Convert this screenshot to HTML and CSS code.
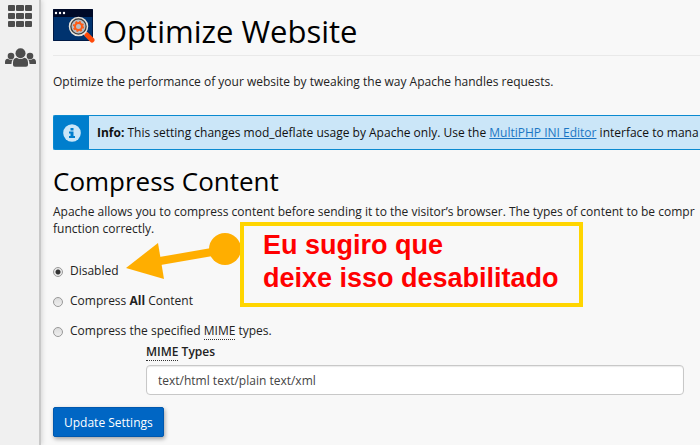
FILE: index.html
```html
<!DOCTYPE html>
<html lang="en">
<head>
    <meta charset="UTF-8">
    <meta name="viewport" content="width=device-width, initial-scale=1.0">
    <title>Optimize Website</title>
    <link rel="stylesheet" href="styles.css">
</head>
<body>
    <nav class="sidebar">
        <a href="#" aria-label="Home">
            <svg width="26" height="22" viewBox="0 0 26 22" fill="#4d4d4d">
                <rect x="1" y="0" width="7" height="6" rx="1"/><rect x="9" y="0" width="8" height="6" rx="1"/><rect x="18" y="0" width="7" height="6" rx="1"/>
                <rect x="1" y="8" width="7" height="6" rx="1"/><rect x="9" y="8" width="8" height="6" rx="1"/><rect x="18" y="8" width="7" height="6" rx="1"/>
                <rect x="1" y="16" width="7" height="6" rx="1"/><rect x="9" y="16" width="8" height="6" rx="1"/><rect x="18" y="16" width="7" height="6" rx="1"/>
            </svg>
        </a>
        <a href="#" aria-label="Users">
            <svg width="32" height="19" viewBox="0 0 32 19" fill="#4d4d4d">
                <circle cx="6" cy="8" r="3.300"/>
                <circle cx="25" cy="8" r="3.300"/>
                <path d="M0 15.500V14q0-3 2.700-3.200 2.800 1.800 5.300.4Q6.600 12.500 6.400 16H1q-1 0-1-.5zM31 15.500V14q0-3-2.700-3.200-2.800 1.800-5.300.4 1.400 1.300 1.600 4.800H30q1 0 1-.5z"/>
                <circle cx="15.500" cy="5.300" r="5"/>
                <path d="M8 17v-2.500q.2-4.500 3.700-4.800 3.800 2.700 7.600 0 3.500.3 3.700 4.800V17q0 1.700-2 1.700h-11q-2 0-2-1.700z"/>
            </svg>
        </a>
    </nav>

    <main class="content">
        <h1 class="page-title">
            <svg width="42" height="34" viewBox="0 0 42 34">
                <rect x="0" y="0" width="40" height="32" rx="1" fill="#00336f"/>
                <path d="M1 0h38q1 0 1 1v7H0V1q0-1 1-1z" fill="#000a28"/>
                <path d="M.5 8v23.500h39V8" fill="none" stroke="#001a44"/>
                <circle cx="3" cy="4" r="1.200" fill="#fff"/><circle cx="7" cy="4" r="1.200" fill="#fff"/><circle cx="11" cy="4" r="1.200" fill="#fff"/>
                <path d="M31 23l3 3" stroke="#e8e8e8" stroke-width="4"/>
                <path d="M34 26l5 5" stroke="#ff4a0a" stroke-width="5" stroke-linecap="round"/>
                <circle cx="25.500" cy="17.500" r="8" fill="#b9bec3" stroke="#3c3c3c" stroke-width="2"/>
                <circle cx="25.500" cy="17.500" r="9" fill="none" stroke="#e8e3da" stroke-width="1.500"/>
                <circle cx="25.500" cy="17.500" r="3.500" fill="none" stroke="#ff5a14" stroke-width="2"/>
                <circle cx="25.500" cy="17.500" r="4.800" fill="none" stroke="#ff5a14" stroke-width="1.600" stroke-dasharray="1.900 1.870"/>
            </svg>
            <span>Optimize Website</span>
        </h1>

        <p class="intro">Optimize the performance of your website by tweaking the way Apache handles requests.</p>

        <div class="alert">
            <div class="alert-icon">
                <svg width="18" height="18" viewBox="0 0 18 18">
                    <circle cx="9" cy="9" r="8.800" fill="#cbe6f8"/>
                    <path d="M7.500 4h3v2.500h-3zM6 7.500h4.500V12H12v2H6v-2h1.500V9.500H6z" fill="#007ecd"/>
                </svg>
            </div>
            <div class="alert-text"><strong>Info:</strong> This setting changes mod_deflate usage by Apache only. Use the <a href="#">MultiPHP INI Editor</a> interface to mana</div>
        </div>

        <h2>Compress Content</h2>
        <p class="description">Apache allows you to compress content before sending it to the visitor’s browser. The types of content to be compr<br>function correctly.</p>

        <form>
            <div class="options">
                <label class="option"><input type="radio" name="compress" checked><span>Disabled</span></label>
                <label class="option"><input type="radio" name="compress"><span>Compress <b>All</b> Content</span></label>
                <label class="option"><input type="radio" name="compress"><span>Compress the specified <abbr>MIME</abbr> types.</span></label>

                <!-- hint over the form -->
                <svg class="arrow" width="118" height="50" viewBox="0 -2 118 50" fill="#ffae00">
                    <path d="M34 27L86 18" stroke="#ffae00" stroke-width="8"/>
                    <path d="M0 34L32 9l6 36z"/>
                    <circle cx="99" cy="15" r="16"/>
                </svg>
                <div class="hint">Eu sugiro que<br>deixe isso desabilitado</div>
            </div>
            <div class="field">
                <label for="mime"><abbr>MIME</abbr> Types</label>
                <input type="text" id="mime" value="text/html text/plain text/xml">
            </div>
            <button type="submit" class="btn">Update Settings</button>
        </form>
    </main>
</body>
</html>
```
FILE: styles.css
```css
* { box-sizing: border-box; }
body {
    margin: 0;
    min-height: 100vh;
    display: flex;
    overflow: hidden;
    background: #f8f8f8;
    color: #222;
    font: 12px/17px "Open Sans", sans-serif;
}
.sidebar {
    flex: none;
    width: 41px;
    padding: 5px 0 0 5px;
    display: flex;
    flex-direction: column;
    gap: 21px;
    background: #f0f0f0;
    border-right: 2px solid #c8c8c8;
    box-shadow: 1px 0 5px rgba(0, 0, 0, 0.15);
}
.sidebar a { display: block; }
.sidebar svg { display: block; }
.sidebar a:first-child { padding-left: 2px; }
.content {
    flex: 1;
    min-width: 0;
    padding: 9px 0 8px 12px;
    white-space: nowrap;
}
h1, h2 { margin: 0; color: #000; font-weight: normal; }
.page-title {
    display: flex;
    gap: 8px;
    height: 47px;
    border-bottom: 1px solid #e9e9e9;
    font-size: 31px;
    line-height: 44px;
}
.page-title svg { flex: none; }
.intro { margin: 17px 0 25px; }
.alert {
    display: flex;
    height: 35px;
    border: 1px solid #0a8ad0;
    border-right: 0;
    border-radius: 2px 0 0 2px;
    background: #cbe6f8;
}
.alert-icon {
    flex: none;
    width: 35px;
    display: flex;
    align-items: center;
    justify-content: center;
    background: #007ecd;
}
.alert-text { padding: 8px 0 8px 8px; color: #111; }
.alert-text a { color: #1b76c4; }
h2 { margin-top: 13px; font-size: 26px; line-height: 36px; }
.description { margin: 4px 0 25px; }
.options {
    position: relative;
    display: flex;
    flex-direction: column;
    align-items: flex-start;
    gap: 13px;
}
.option { display: flex; align-items: center; gap: 7px; }
input[type="radio"] {
    appearance: none;
    width: 10px;
    height: 10px;
    margin: 2px 0 0;
    border: 1px solid #999;
    border-radius: 50%;
    background: linear-gradient(#ddd, #eee);
}
input[type="radio"]:checked {
    background: radial-gradient(circle, #333 0 2px, #e8e8e8 3px);
}
abbr { text-decoration: none; border-bottom: 1px dotted #333; }
.arrow {
    position: absolute;
    top: -30px;
    left: 73px;
}
.hint {
    position: absolute;
    top: -40px;
    left: 187px;
    width: 343px;
    height: 85px;
    padding: 3px 19px;
    border: 4px solid #ffd500;
    background: #f8f8f8;
    color: #f00;
    font: bold 27px/33px "Liberation Sans", Arial, sans-serif;
}
.field { margin: 4px 16px 12px 93px; }
.field label { display: block; margin-bottom: 5px; font-weight: 600; }
.field input {
    display: block;
    width: 100%;
    height: 30px;
    padding: 0 11px;
    border: 1px solid #c8c8c8;
    border-radius: 4px;
    background: #fff;
    box-shadow: inset 0 1px 1px rgba(0, 0, 0, 0.08);
    color: #444;
    font: inherit;
}
.btn {
    height: 30px;
    padding: 0 10px;
    border: 1px solid #0058ae;
    border-radius: 2px;
    background: #0066c4;
    box-shadow: 1px 2px 4px rgba(0, 0, 0, 0.35);
    color: #fff;
    font: inherit;
}
```
